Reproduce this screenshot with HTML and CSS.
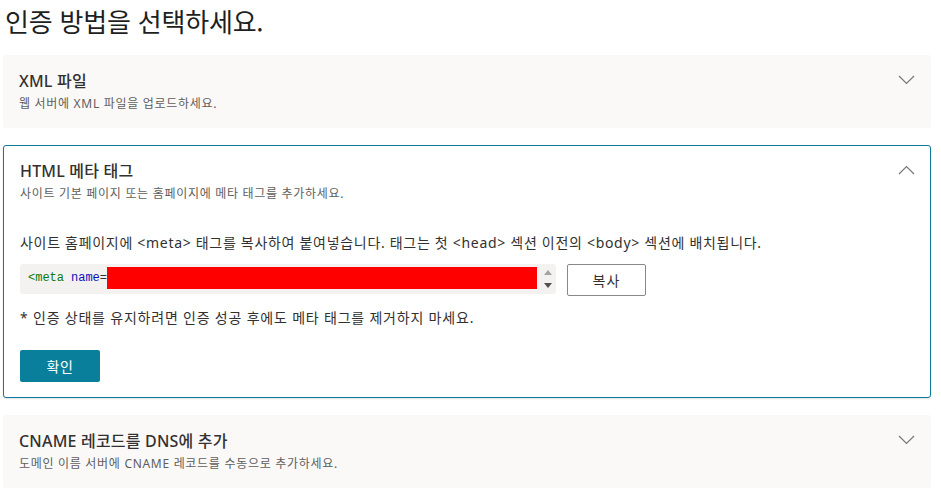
FILE: index.html
```html
<!DOCTYPE html>
<html lang="ko">
<head>
<meta charset="utf-8">
<title>인증 방법</title>
<link rel="stylesheet" href="styles.css">
</head>
<body>
<div class="page">
  <h1 class="page-title">인증 방법을 선택하세요.</h1>

  <section class="card">
    <div class="card-head">
      <div class="card-text">
        <div class="card-title">XML 파일</div>
        <div class="card-sub">웹 서버에 XML 파일을 업로드하세요.</div>
      </div>
      <svg class="chev" width="17" height="10" viewBox="0 0 17 10"><polyline points="1,1 8.5,8.5 16,1" fill="none" stroke="#797775" stroke-width="1.2"/></svg>
    </div>
  </section>

  <section class="card card-open">
    <div class="card-head">
      <div class="card-text">
        <div class="card-title">HTML 메타 태그</div>
        <div class="card-sub">사이트 기본 페이지 또는 홈페이지에 메타 태그를 추가하세요.</div>
      </div>
      <svg class="chev" width="17" height="10" viewBox="0 0 17 10"><polyline points="1,9 8.5,1.5 16,9" fill="none" stroke="#797775" stroke-width="1.2"/></svg>
    </div>
    <div class="card-body">
      <p class="desc">사이트 홈페이지에 &lt;meta&gt; 태그를 복사하여 붙여넣습니다. 태그는 첫 &lt;head&gt; 섹션 이전의 &lt;body&gt; 섹션에 배치됩니다.</p>
      <div class="code-row">
        <div class="code-box">
          <div class="code-text"><span class="tag">&lt;meta</span> <span class="attr">name</span>=<span class="redact"></span></div>
          <div class="code-scroll">
            <span class="arrow-up"></span>
            <span class="arrow-down"></span>
          </div>
        </div>
        <button class="btn-copy">복사</button>
      </div>
      <p class="note">* 인증 상태를 유지하려면 인증 성공 후에도 메타 태그를 제거하지 마세요.</p>
      <button class="btn-primary">확인</button>
    </div>
  </section>

  <section class="card">
    <div class="card-head">
      <div class="card-text">
        <div class="card-title">CNAME 레코드를 DNS에 추가</div>
        <div class="card-sub">도메인 이름 서버에 CNAME 레코드를 수동으로 추가하세요.</div>
      </div>
      <svg class="chev" width="17" height="10" viewBox="0 0 17 10"><polyline points="1,1 8.5,8.5 16,1" fill="none" stroke="#797775" stroke-width="1.2"/></svg>
    </div>
  </section>
</div>
</body>
</html>
```

FILE: styles.css
```css
* { box-sizing: border-box; }
html, body { margin: 0; padding: 0; background: #ffffff; }
body {
  font-family: "Noto Sans", "Noto Sans CJK KR", sans-serif;
  color: #323130;
}
.page {
  width: 931px;
  padding-left: 3px;
  display: flex;
  flex-direction: column;
  gap: 17px;
}
.page-title {
  margin: 0;
  padding: 3px 0 0 2px;
  font-size: 26px;
  line-height: 35px;
  font-weight: 400;
  color: #201f1e;
  font-family: "Noto Sans CJK KR", sans-serif;
  letter-spacing: -0.2px;
}
.card {
  background: #faf9f8;
  border-radius: 3px;
  padding: 15px 16px 15px 16px;
}
.card-open {
  background: #ffffff;
  border: 1px solid #0f7b98;
  padding: 14px 15px 15px 16px;
  box-shadow: 0 1px 2px rgba(0,0,0,0.12);
}
.card-head {
  display: flex;
  justify-content: space-between;
  align-items: flex-start;
}
.card-text {
  display: flex;
  flex-direction: column;
  gap: 3px;
}
.card-title {
  font-size: 16px;
  line-height: 22px;
  font-weight: 500;
  color: #323130;
  letter-spacing: 0.2px;
}
.card-sub {
  font-size: 12px;
  line-height: 18px;
  color: #605e5c;
  letter-spacing: 0.7px;
}
.chev { margin-top: 5px; margin-right: 0; }
.card-body {
  padding-top: 30px;
  display: flex;
  flex-direction: column;
  align-items: flex-start;
}
.desc {
  margin: 0;
  font-size: 14px;
  line-height: 20px;
  color: #323130;
  letter-spacing: 0.7px;
}
.code-row {
  margin-top: 11px;
  display: flex;
  gap: 11px;
  align-items: flex-start;
}
.code-box {
  width: 536px;
  height: 30px;
  background: #f3f2f1;
  border-radius: 3px;
  display: flex;
}
.code-text {
  flex: 1;
  padding: 3px 0 0 8px;
  font-family: "Liberation Mono", monospace;
  font-size: 12px;
  line-height: 22px;
  color: #323130;
  white-space: nowrap;
  overflow: hidden;
  display: flex;
  align-items: flex-start;
}
.tag { color: #0c7a0c; }
.attr { color: #1010b8; margin-left: 7px; }
.redact {
  display: inline-block;
  width: 430px;
  height: 22px;
  background: #ff0000;
}
.code-scroll {
  width: 16px;
  display: flex;
  flex-direction: column;
  justify-content: space-between;
  align-items: center;
  padding: 6px 0 6px;
}
.arrow-up {
  width: 0; height: 0;
  border-left: 4px solid transparent;
  border-right: 4px solid transparent;
  border-bottom: 5px solid #a3a3a3;
}
.arrow-down {
  width: 0; height: 0;
  border-left: 4px solid transparent;
  border-right: 4px solid transparent;
  border-top: 5px solid #505050;
}
.btn-copy {
  width: 79px;
  height: 32px;
  background: #ffffff;
  border: 1px solid #8a8886;
  border-radius: 2px;
  font-family: "Noto Sans CJK KR", sans-serif;
  font-size: 14px;
  color: #323130;
  padding: 0;
  letter-spacing: 1px;
}
.note {
  margin: 12px 0 0;
  font-size: 14px;
  line-height: 20px;
  color: #323130;
  letter-spacing: 0.8px;
}
.btn-primary {
  margin-top: 22px;
  width: 80px;
  height: 32px;
  background: #0a7f9c;
  border: none;
  border-radius: 2px;
  color: #ffffff;
  font-family: "Noto Sans CJK KR", sans-serif;
  font-size: 14px;
  padding: 0;
  letter-spacing: 0.5px;
}
```
